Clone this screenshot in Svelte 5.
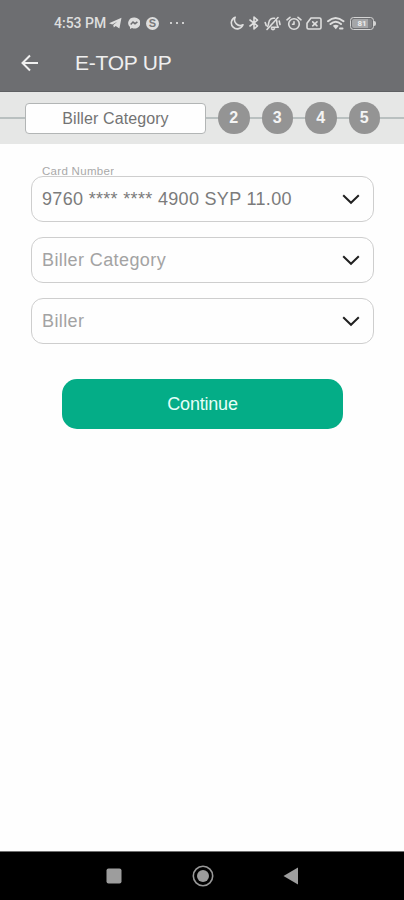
<script lang="ts">
  interface Field {
    id: string;
    label?: string;
    value?: string;
    placeholder: string;
  }

  const steps = [2, 3, 4, 5];

  const fields: Field[] = [
    { id: 'card', label: 'Card Number', value: '9760 **** **** 4900 SYP 11.00', placeholder: 'Card Number' },
    { id: 'category', placeholder: 'Biller Category' },
    { id: 'biller', placeholder: 'Biller' },
  ];
</script>

<div class="screen">
  <header class="top">
    <div class="status-bar">
      <div class="status-left">
        <span class="clock">4:53 PM</span>
        <svg class="telegram" width="13" height="12" viewBox="0 0 13 12">
          <path d="M0 6.2 12.5 0.8 10.4 11.4 6.7 8.9 4.8 10.5 4.2 8 8.500 4.500 3.300 7.600Z" fill="currentColor" />
        </svg>
        <svg class="messenger" width="12" height="13" viewBox="0 0 12 13">
          <path d="M6 .6a5.8 5.5 0 0 0-4 9.5v2l2-1.1A5.8 5.5 0 1 0 6 .6Z" fill="currentColor" />
          <path d="m2.7 7.5 2.3-2.4 2 1.6 2.4-1.9" fill="none" stroke="#6d6e71" stroke-width="1.5" />
        </svg>
        <span class="coin">S</span>
        <span class="dots"><i></i><i></i><i></i></span>
      </div>

      <div class="status-right">
        <svg width="14" height="14" viewBox="0 0 14 14">
          <path d="M5.2 1.2A6 6 0 1 0 13 8.8 5.7 5.7 0 0 1 5.2 1.2Z" class="line" />
        </svg>
        <svg class="bluetooth" width="10" height="14" viewBox="0 0 10 14">
          <path d="m1 4 7.5 5.8L5 13V1l3.5 3.2L1 10" class="line" />
        </svg>
        <svg class="muted" width="17" height="15" viewBox="0 0 17 15">
          <path d="M3.500 10.500c1-1 1.100-2.200 1.300-4C5.200 3.400 7.500 1.800 10.500 2.300M12.800 4.800c0 3-.3 4.200 1.400 6.500H7.500M7.500 12.800c.8 1.100 2.200 1.100 3 0M3 13.500 14 1.500M1.200 6.500l1 3M15.200 5l.8 3.500" class="line" />
        </svg>
        <svg class="alarm" width="16" height="15" viewBox="0 0 16 15">
          <circle cx="8" cy="8" r="5.300" class="line" />
          <path d="M1 3.800 4 1.300M12 1.300l3 2.500M8 5.700V8.200H6.500" class="line" />
        </svg>
        <svg class="sim" width="16" height="13" viewBox="0 0 16 13">
          <path d="M5 1h8.500Q15 1 15 2.500v8q0 1.500-1.500 1.500h-11Q1 12 1 10.500V6.200Z" class="line" />
          <path d="m6.700 4.800 4.300 4M11 4.800l-4.300 4" class="line" />
        </svg>
        <svg class="wifi" width="18" height="15" viewBox="0 0 18 15">
          <path d="M1 5.200q7.500-6.500 15.500 0M3.500 8q5.200-4.500 10.500 0" class="line thick" />
          <path d="M5.800 9.800q3-2.300 6 0l-3 3.400Z" fill="currentColor" />
          <path d="M13 12.500h2.500" class="line thick" />
        </svg>
        <div class="battery"><span>81</span></div>
      </div>
    </div>

    <div class="title-bar">
      <button type="button" class="back" aria-label="Back">
        <svg width="18" height="18" viewBox="0 0 18 18">
          <path d="M17 9H2M9 1.500 1.500 9 9 16.500" />
        </svg>
      </button>
      <h1>E-TOP UP</h1>
    </div>
  </header>

  <div class="stepper">
    <span class="step-current">Biller Category</span>
    {#each steps as step (step)}
      <span class="step">{step}</span>
    {/each}
  </div>

  <main>
    {#each fields as field (field.id)}
      <button type="button" class="field" class:filled={!!field.value}>
        {#if field.label}
          <span class="field-label">{field.label}</span>
        {/if}
        <span class="field-text">{field.value ?? field.placeholder}</span>
        <svg width="18" height="11" viewBox="0 0 18 11">
          <path d="m1.200 1.300 7.800 7.500 7.800-7.500" />
        </svg>
      </button>
    {/each}

    <button type="button" class="continue">Continue</button>
  </main>

  <nav>
    <svg width="16" height="16" viewBox="0 0 16 16">
      <rect x=".5" y=".5" width="15" height="15" rx="2" fill="#9d9d9d" />
    </svg>
    <svg width="22" height="22" viewBox="0 0 22 22">
      <circle cx="11" cy="11" r="9.700" fill="none" stroke="#989898" stroke-width="1.600" />
      <circle cx="11" cy="11" r="6" fill="#9d9d9d" />
    </svg>
    <svg width="16" height="18" viewBox="0 0 16 18">
      <path d="M15 .5v17L.5 9Z" fill="#9d9d9d" />
    </svg>
  </nav>
</div>

<style>
  :global(body) {
    margin: 0;
    background: #fefefe;
  }

  .screen {
    display: flex;
    flex-direction: column;
    height: 900px;
    font-family: "Liberation Sans", Arial, sans-serif;
    background: #fefefe;
  }

  button {
    margin: 0;
    padding: 0;
    border: none;
    background: none;
    font-family: inherit;
  }

  svg {
    display: block;
    flex: none;
  }

  .top {
    box-sizing: border-box;
    height: 92px;
    background: #6d6e71;
    border-bottom: 1px solid #5f6063;
  }

  .status-bar {
    display: flex;
    justify-content: space-between;
    height: 46px;
    padding: 0 27px 0 54px;
    color: #dedede;
  }

  .status-left,
  .status-right {
    display: flex;
    align-items: center;
  }

  .clock {
    width: 55px;
    font: 500 14px Roboto, sans-serif;
    white-space: nowrap;
  }

  .messenger { margin-left: 6px; }

  .coin {
    width: 13px;
    height: 13px;
    margin-left: 6px;
    border-radius: 50%;
    background: #dedede;
    color: #77787a;
    font-size: 11px;
    font-weight: 700;
    line-height: 13px;
    text-align: center;
  }

  .dots {
    display: flex;
    gap: 4px;
    margin-left: 11px;
  }
  .dots i {
    width: 2px;
    height: 2px;
    background: #cfcfcf;
  }

  .line {
    fill: none;
    stroke: currentColor;
    stroke-width: 1.6;
    stroke-linecap: round;
    stroke-linejoin: round;
  }
  .thick { stroke-width: 2; }

  .bluetooth { margin-left: 5px; }
  .muted { margin-left: 5px; }
  .alarm { margin-left: 5px; }
  .sim { margin-left: 4px; }
  .wifi { margin-left: 5px; }

  .battery {
    position: relative;
    box-sizing: border-box;
    width: 24px;
    height: 13px;
    margin: 0 3px 0 5px;
    padding: 1px;
    border: 1px solid #d4d4d4;
    border-radius: 3.5px;
  }
  .battery::after {
    content: '';
    position: absolute;
    top: 3px;
    right: -3px;
    width: 2px;
    height: 5px;
    border-radius: 0 2px 2px 0;
    background: #d4d4d4;
  }
  .battery span {
    display: block;
    height: 9px;
    border-radius: 2px;
    background: linear-gradient(90deg, #a5a6a8 81%, #808184 81%);
    color: #eeeeee;
    font: 700 8px/9px Roboto, sans-serif;
    text-align: center;
  }

  .title-bar {
    display: flex;
    align-items: center;
    height: 34px;
    padding-left: 21px;
  }

  .back path {
    fill: none;
    stroke: #f0f0f0;
    stroke-width: 2;
  }

  h1 {
    margin: 0 0 0 36px;
    color: #efefef;
    font-size: 21px;
    font-weight: 400;
    line-height: 24px;
    letter-spacing: -0.25px;
  }

  .stepper {
    display: flex;
    align-items: center;
    gap: 12px;
    height: 52px;
    padding: 0 24px 0 25px;
    background: linear-gradient(#b9c0c0, #b9c0c0) 0 25px / 100% 2px no-repeat, #e6e7e6;
  }

  .step-current {
    box-sizing: border-box;
    flex: 1;
    height: 31px;
    border: 1px solid #b2b5b5;
    border-radius: 4px;
    background: #fefefe;
    color: #737373;
    font-size: 16px;
    line-height: 29px;
    letter-spacing: 0.1px;
    text-align: center;
  }

  .step {
    width: 31.5px;
    height: 31.5px;
    border-radius: 50%;
    background: #949494;
    color: #f4f4f4;
    font-size: 16px;
    font-weight: 700;
    line-height: 31px;
    text-align: center;
  }

  main {
    display: flex;
    flex: 1;
    flex-direction: column;
    gap: 15px;
    padding: 32px 30px 0 31px;
  }

  .field {
    position: relative;
    box-sizing: border-box;
    display: flex;
    align-items: center;
    justify-content: space-between;
    height: 46px;
    padding: 0 13px 0 10px;
    border: 1px solid #cecece;
    border-radius: 12px;
    color: #a3a3a3;
    font-size: 18px;
    letter-spacing: 0.4px;
  }
  .field.filled .field-text {
    color: #7b7b7b;
    letter-spacing: 0.32px;
  }

  .field-label {
    position: absolute;
    top: -12px;
    left: 10px;
    height: 12px;
    overflow: hidden;
    color: #a9a9a9;
    font-size: 11.5px;
    line-height: 13px;
    letter-spacing: 0.3px;
  }

  .field path {
    fill: none;
    stroke: #202020;
    stroke-width: 2;
  }

  .continue {
    align-self: center;
    width: 281px;
    height: 50px;
    margin-top: 20px;
    border-radius: 15px;
    background: #04ad87;
    color: #e4fff8;
    font-size: 18px;
    letter-spacing: -0.2px;
  }

  nav {
    box-sizing: border-box;
    display: flex;
    align-items: center;
    justify-content: space-between;
    height: 49px;
    padding: 0 105px 0 106px;
    border-top: 1px solid #707070;
    background: #000;
  }
</style>
